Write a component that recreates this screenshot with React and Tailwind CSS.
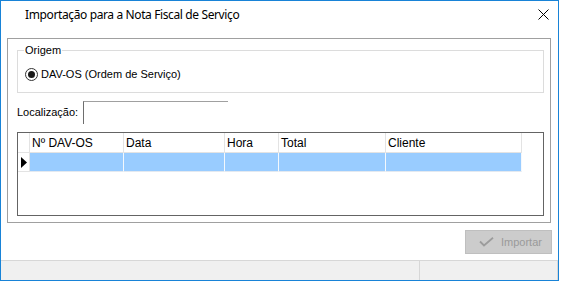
import React from "react";

const cols = [
  { w: "w-[94px]", label: "Nº DAV-OS" },
  { w: "w-[101px]", label: "Data" },
  { w: "w-[54px]", label: "Hora" },
  { w: "w-[107px]", label: "Total" },
  { w: "w-[136px]", label: "Cliente" },
];

export default function App() {
  return (
    <div className="w-[561px] h-[283px] bg-white" style={{ fontFamily: '"Liberation Sans", Arial, sans-serif' }}>
      <div className="w-[559px] h-[281px] border border-[#1883d7] flex flex-col bg-white">
        {/* Title bar */}
        <div className="h-[31px] flex items-center justify-between shrink-0">
          <span
            className="pl-[24px] text-[12px] tracking-[-0.38px] text-black leading-[16px] -mt-[3px]"
            style={{ fontFamily: '"Noto Sans", "Open Sans", sans-serif' }}
          >
            Importação para a Nota Fiscal de Serviço
          </span>
          <svg width="11" height="11" viewBox="0 0 11 11" className="mr-[9px] -mt-[5px]">
            <path d="M0.5 0.5 L10.5 10.5 M10.5 0.5 L0.5 10.5" stroke="#000" strokeWidth="1" fill="none" />
          </svg>
        </div>

        {/* Content */}
        <div className="h-[228px] flex flex-col shrink-0 text-[11px] text-black">
          <div className="mt-[6px] ml-[6px] w-[544px] h-[185px] border border-[#a0a0a0] flex flex-col">
            {/* Origem group */}
            <div className="mt-[11px] ml-[9px] w-[527px] h-[43px] border border-[#dcdcdc] flex flex-col">
              <div className="-mt-[7px] ml-[6px] w-fit bg-white px-[1px] leading-[13px]">Origem</div>
              <div className="mt-[11px] ml-[7px] flex items-center gap-[3px] h-[13px]">
                <div className="w-[13px] h-[13px] rounded-full border border-[#333333] bg-white flex items-center justify-center">
                  <div className="w-[7px] h-[7px] rounded-full bg-[#1a1a1a]" />
                </div>
                <span className="leading-[13px]">DAV-OS (Ordem de Serviço)</span>
              </div>
            </div>

            {/* Localização */}
            <div className="mt-[8px] ml-[9px] flex items-center h-[23px]">
              <span className="w-[66px] leading-[13px]">Localização:</span>
              <div className="w-[145px] h-[23px] border-t border-l border-t-[#a0a0a0] border-l-[#6e6e6e] bg-white" />
            </div>

            {/* Grid */}
            <div className="mt-[8px] ml-[9px] w-[527px] h-[84px] border border-[#646464] bg-white flex flex-col">
              <div className="flex h-[20px] text-[12px]">
                <div className="w-[12px] h-[20px] border-r border-b border-[#e3e3e3]" />
                {cols.map((c) => (
                  <div key={c.label} className={`${c.w} h-[20px] border-r border-b border-[#e3e3e3] pl-[2px] leading-[20px]`}>
                    {c.label}
                  </div>
                ))}
              </div>
              <div className="flex h-[19px]">
                <div className="w-[12px] h-[19px] border-r border-b border-[#e3e3e3] flex items-center pl-[3px]">
                  <svg width="6" height="11" viewBox="0 0 6 11">
                    <path d="M0 0 L6 5.5 L0 11 Z" fill="#000" />
                  </svg>
                </div>
                {cols.map((c) => (
                  <div key={c.label} className={`${c.w} h-[19px] bg-[#99ccff] border-r border-b border-r-[#f4f8fc] border-b-[#e3e9f0]`} />
                ))}
              </div>
            </div>
          </div>

          {/* Button */}
          <div className="mt-[7px] self-end mr-[6px] w-[87px] h-[24px] bg-[#cccccc] border border-[#bfbfbf] flex items-center">
            <svg width="15" height="10" viewBox="0 0 15 10" className="ml-[13px]">
              <path d="M1 4.5 L5 8.5 L14 0.8" stroke="#9c9c9c" strokeWidth="1.8" fill="none" />
            </svg>
            <span className="ml-[7px] text-[11px] text-[#9a9a9a] leading-[13px]">Importar</span>
          </div>
        </div>

        {/* Status bar */}
        <div className="h-[20px] border-t border-[#d7d7d7] bg-[#f0f0f0] flex shrink-0">
          <div className="w-[419px] h-full border-r border-[#d7d7d7]" />
          <div className="flex-1 h-full border-r border-[#d7d7d7]" />
        </div>
      </div>
    </div>
  );
}
